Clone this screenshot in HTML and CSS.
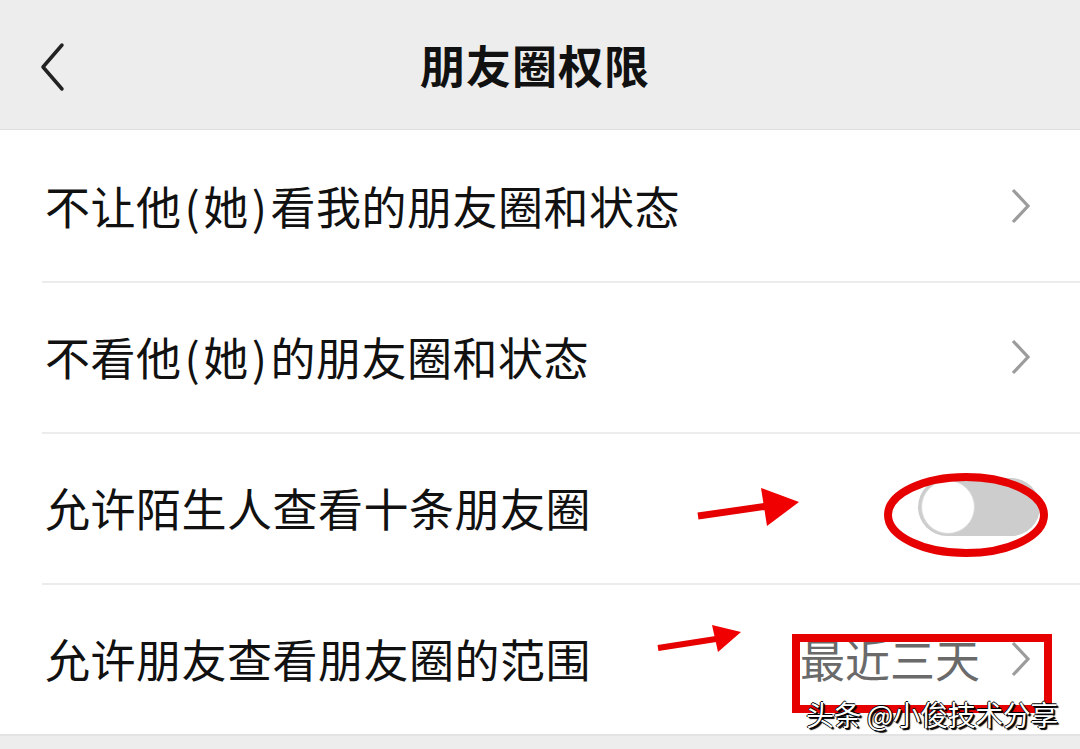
FILE: index.html
```html
<!DOCTYPE html>
<html lang="zh-CN">
<head>
    <meta charset="UTF-8">
    <meta name="viewport" content="width=device-width, initial-scale=1.0">
    <title>朋友圈权限</title>
    <link rel="stylesheet" href="styles.css">
</head>
<body>
    <div class="page">
        <header class="topbar">
            <svg class="back" width="30" height="50" viewBox="0 0 30 50">
                <path d="M24 3 L5 25 L24 47" fill="none" stroke="#222" stroke-width="3.5" stroke-linecap="round" stroke-linejoin="round"/>
            </svg>
            <h1 class="title">朋友圈权限</h1>
        </header>

        <ul class="list">
            <li class="row">
                <span class="label">不让他<span class="paren">(</span>她<span class="paren">)</span>看我的朋友圈和状态</span>
                <svg class="arrow" width="22" height="36" viewBox="0 0 22 36"><path d="M3 2 L18 18 L3 34" fill="none" stroke="#9c9c9c" stroke-width="3.2"/></svg>
            </li>
            <li class="row">
                <span class="label">不看他<span class="paren">(</span>她<span class="paren">)</span>的朋友圈和状态</span>
                <svg class="arrow" width="22" height="36" viewBox="0 0 22 36"><path d="M3 2 L18 18 L3 34" fill="none" stroke="#9c9c9c" stroke-width="3.2"/></svg>
            </li>
            <li class="row">
                <span class="label">允许陌生人查看十条朋友圈</span>
                <div class="switch"><span class="knob"></span></div>
            </li>
            <li class="row">
                <span class="label">允许朋友查看朋友圈的范围</span>
                <span class="value">最近三天</span>
                <svg class="arrow" width="22" height="36" viewBox="0 0 22 36"><path d="M3 2 L18 18 L3 34" fill="none" stroke="#9c9c9c" stroke-width="3.2"/></svg>
            </li>
        </ul>

        <div class="bottom"></div>

        <!-- red marks drawn over the screenshot -->
        <svg class="marks" width="1080" height="749" viewBox="0 0 1080 749">
            <line x1="698" y1="516" x2="768" y2="506" stroke="#e60000" stroke-width="7"/>
            <polygon points="761,488 767,526 799,502" fill="#f00000"/>
            <ellipse cx="966" cy="515" rx="78" ry="38" fill="none" stroke="#e60000" stroke-width="8"/>
            <line x1="658" y1="648" x2="716" y2="639" stroke="#e60000" stroke-width="6"/>
            <polygon points="712,625 718,652 741,632" fill="#f00000"/>
            <rect x="796" y="638" width="252" height="71" fill="none" stroke="#e60000" stroke-width="8"/>
        </svg>
        <div class="watermark">头条 @小俊技术分享</div>
    </div>
</body>
</html>
```

FILE: styles.css
```css
body { margin: 0; background: #ededed; font-family: "Noto Sans CJK SC", "Noto Sans", sans-serif; color: #111; }
.page { position: relative; width: 1080px; height: 749px; overflow: hidden; }
.topbar { height: 130px; display: flex; align-items: center; justify-content: center; position: relative; border-bottom: 1px solid #dedede; box-sizing: border-box; padding-right: 10px; }
.back { position: absolute; left: 38px; top: 42px; }
.title { margin: 0; font-size: 45px; font-weight: 700; letter-spacing: 1px; color: #111; line-height: 1; }
.list { list-style: none; margin: 0; padding: 0; background: #fff; }
.row { height: 151px; display: flex; align-items: center; padding: 0 48px 0 45px; box-sizing: border-box; position: relative; }
.row + .row::before { content: ""; position: absolute; left: 42px; right: 0; top: 0; border-top: 2px solid #ececec; }
.label { flex: 1; font-size: 45px; letter-spacing: 0.5px; color: #111; }
.paren { margin: 0 3px; }
.value { font-size: 45px; color: #6a6a6a; margin-right: 30px; }
.arrow { display: block; }
.switch { width: 122px; height: 58px; border-radius: 29px; background: #cdcdcd; position: relative; margin-right: -8px; margin-top: -2px; }
.knob { position: absolute; left: 3px; top: 2px; width: 54px; height: 54px; border-radius: 50%; background: #fff; border: 1px solid #d8d8d8; box-sizing: border-box; }
.bottom { height: 20px; border-top: 2px solid #e3e3e3; background: #ededed; }
.marks { position: absolute; left: 0; top: 0; }
.watermark { position: absolute; left: 806px; top: 694px; font-size: 28px; color: #fff; letter-spacing: -0.5px; text-shadow: 1px 1px 0 #000, -1px 0 0 #000, 0 -1px 0 #000, 2px 2px 1px #000; }
```
